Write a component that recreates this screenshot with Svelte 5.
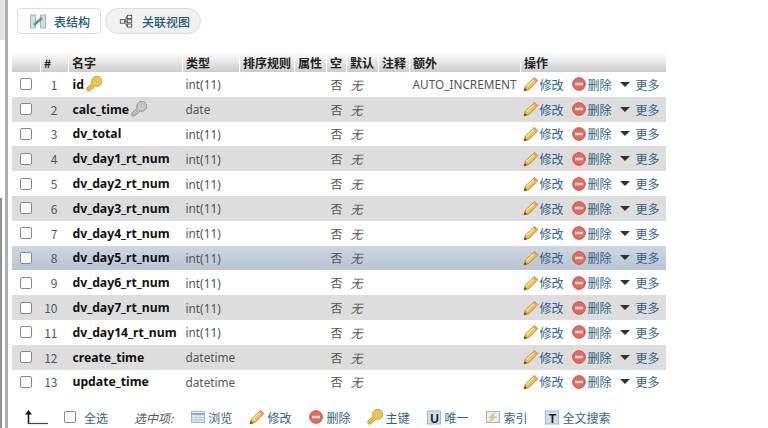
<script>
    const fields = [
        { name: "id", type: "int(11)", key: "primary", extra: "AUTO_INCREMENT" },
        { name: "calc_time", type: "date", key: "index" },
        { name: "dv_total", type: "int(11)" },
        { name: "dv_day1_rt_num", type: "int(11)" },
        { name: "dv_day2_rt_num", type: "int(11)" },
        { name: "dv_day3_rt_num", type: "int(11)" },
        { name: "dv_day4_rt_num", type: "int(11)" },
        { name: "dv_day5_rt_num", type: "int(11)", hover: true },
        { name: "dv_day6_rt_num", type: "int(11)" },
        { name: "dv_day7_rt_num", type: "int(11)" },
        { name: "dv_day14_rt_num", type: "int(11)" },
        { name: "create_time", type: "datetime" },
        { name: "update_time", type: "datetime" }
    ];
    const heads = ["", "#", "名字", "类型", "排序规则", "属性", "空", "默认", "注释", "额外", "操作"];
</script>

{#snippet pencil()}
    <svg class="ic" width="16" height="16" viewBox="0 0 16 16">
        <path d="M1 15 L2.5 10 L11.5 1.5 L14.8 4.6 L6 13.4 Z" fill="#f3c352" stroke="#b5842c" stroke-width="1"/>
        <path d="M3.5 10.5 L11.8 2.8" stroke="#fbe7a8" stroke-width="1.4"/>
        <path d="M11.5 1.5 L14.8 4.6 L13.2 6.2 L9.9 3.1 Z" fill="#e8a070"/>
        <path d="M1 15 L1.9 12 L4 14 Z" fill="#5a4420"/>
    </svg>
{/snippet}

{#snippet remove()}
    <svg class="ic" width="16" height="16" viewBox="0 0 16 16">
        <circle cx="8" cy="8" r="6.3" fill="#e9695e" stroke="#cb4a40"/>
        <rect x="4" y="6.8" width="8" height="2.4" fill="#fbe3df"/>
    </svg>
{/snippet}

{#snippet keyIcon(fill, line)}
    <svg class="ic" width="16" height="16" viewBox="0 0 16 16">
        <path d="M6.2 7.2 A5 5 0 1 1 9.2 10 L7.6 11 L6.8 12.6 L5 13 L4.4 14.6 L1.8 15.2 L0.8 14 L1 12 Z" fill={fill} stroke={line}/>
        <path d="M2.2 13.6 L7.2 8.8" stroke={line} stroke-width="0.8"/>
        <circle cx="11.6" cy="4.2" r="1.3" fill="#fff" fill-opacity="0.65" stroke={line} stroke-width="0.6"/>
    </svg>
{/snippet}

<div class="shell">
    <aside class="side">
        <div class="side-top"></div>
        <div class="side-gap"></div>
        <div class="side-low"></div>
    </aside>

    <main class="page">
        <nav class="tabs">
            <button class="tab">
                <svg width="16" height="16" viewBox="0 0 16 16">
                    <rect x="0.5" y="2" width="5" height="13" fill="#cddcee" stroke="#9cb5d3"/>
                    <rect x="10.5" y="2" width="5" height="13" fill="#cddcee" stroke="#9cb5d3"/>
                    <path d="M4 12 L12 5" stroke="#5da03a" stroke-width="2.5"/>
                </svg>
                表结构
            </button>
            <button class="tab round">
                <svg width="14" height="14" viewBox="0 0 16 16">
                    <g fill="#fff" stroke="#444">
                        <rect x="1.5" y="6.5" width="5" height="4"/>
                        <rect x="9.5" y="1.5" width="5" height="3.5"/>
                        <rect x="9.5" y="6.5" width="5" height="3.5"/>
                        <rect x="9.5" y="11.5" width="5" height="3.5"/>
                        <path d="M6.5 8.5 H8 M8 3.5 V13 M8 3.5 H9.5 M8 13 H9.5"/>
                    </g>
                </svg>
                关联视图
            </button>
        </nav>

        <table>
            <thead>
                <tr>
                    {#each heads as h}
                        <th>{h}</th>
                    {/each}
                </tr>
            </thead>
            <tbody>
                {#each fields as f, i}
                    <tr class:even={i % 2 === 1} class:hover={f.hover}>
                        <td class="chk"><span class="box"></span></td>
                        <td class="num">{i + 1}</td>
                        <td class="name">
                            <div class="namewrap">
                                <b>{f.name}</b>
                                {#if f.key === "primary"}
                                    {@render keyIcon("#f4c552", "#cf9a30")}
                                {:else if f.key === "index"}
                                    {@render keyIcon("#c6c6c6", "#939393")}
                                {/if}
                            </div>
                        </td>
                        <td class="latin">{f.type}</td>
                        <td></td>
                        <td></td>
                        <td>否</td>
                        <td><i>无</i></td>
                        <td></td>
                        <td class="latin">{f.extra ?? ""}</td>
                        <td class="opcell">
                            <div class="actions">
                                <span class="act">{@render pencil()}<span>修改</span></span>
                                <span class="act">{@render remove()}<span>删除</span></span>
                                <span class="act more"><span class="caret"></span><span>更多</span></span>
                            </div>
                        </td>
                    </tr>
                {/each}
            </tbody>
        </table>

        <footer class="bulk">
            <svg class="arrow" width="26" height="16" viewBox="0 0 26 16">
                <path d="M5.5 15 V3" stroke="#111" stroke-width="1.5"/>
                <path d="M2 5.5 L5.5 1 L9 5.5 Z" fill="#111"/>
                <path d="M5 14.5 H25" stroke="#444" stroke-width="1.2"/>
            </svg>
            <span class="box"></span>
            <span class="all">全选</span>
            <i class="with">选中项:</i>
            <span class="link">
                <svg class="ic" width="16" height="16" viewBox="0 0 16 16">
                    <rect x="1.5" y="2.5" width="13" height="11" fill="#e6eef8" stroke="#9db6d3"/>
                    <path d="M1.5 5 H14.5" stroke="#8eabd0" stroke-width="2"/>
                    <path d="M2 8.5 H14 M2 11 H14 M6 6 V13 M10 6 V13" stroke="#b5c9e2"/>
                </svg>
                浏览
            </span>
            <span class="link">{@render pencil()}修改</span>
            <span class="link">{@render remove()}删除</span>
            <span class="link">{@render keyIcon("#f4c552", "#cf9a30")}主键</span>
            <span class="link">
                <svg class="ic" width="16" height="16" viewBox="0 0 16 16">
                    <rect x="1.5" y="2" width="13" height="13" fill="#cfdff0" stroke="#9db6d3"/>
                    <text x="8.5" y="14" text-anchor="middle" class="glyph">U</text>
                </svg>
                唯一
            </span>
            <span class="link">
                <svg class="ic" width="16" height="16" viewBox="0 0 16 16">
                    <rect x="1.5" y="2.5" width="13" height="11" fill="#e6eef7" stroke="#9db6d3"/>
                    <path d="M10 3 L3 9 H6.5 L3.5 14 L12 7.5 H8.5 Z" fill="#ecc552"/>
                </svg>
                索引
            </span>
            <span class="link">
                <svg class="ic" width="16" height="16" viewBox="0 0 16 16">
                    <rect x="1.5" y="2" width="13" height="13" fill="#cfdff0" stroke="#9db6d3"/>
                    <text x="8.5" y="14" text-anchor="middle" class="glyph">T</text>
                </svg>
                全文搜索
            </span>
        </footer>
    </main>
</div>

<style>
    :global(body) {
        background: #fff;
        overflow: hidden;
    }

    .shell {
        display: flex;
        height: 428px;
        overflow: hidden;
    }

    .side {
        display: flex;
        flex-direction: column;
        flex: none;
        width: 5px;
        border-right: 3px solid #adadad;
    }

    .side-top {
        height: 40px;
        background: #e2e2e2;
    }

    .side-gap {
        height: 158px;
    }

    .side-low {
        flex: 1;
        width: 2px;
        background: #8f8f8f;
    }

    .page {
        flex: 1;
        padding-top: 8px;
        font-family: "Noto Sans CJK SC", "Noto Sans", sans-serif;
        font-size: 12px;
        color: #555;
    }

    .tabs {
        display: flex;
        gap: 5px;
        margin: 0 0 18px 9px;
    }

    .tab {
        display: flex;
        align-items: center;
        gap: 8px;
        height: 26px;
        padding: 0 10px 0 12px;
        background: #fff;
        border: 1px solid #ddd;
        border-radius: 4px;
        font: inherit;
        font-weight: 500;
        color: #235a81;
    }

    .tab.round {
        gap: 9px;
        margin-left: -1px;
        border-radius: 13px;
        padding: 0 10px 0 13px;
        background: #f1f1f1;
    }

    table {
        border-collapse: collapse;
        margin-left: 3px;
        width: 655px;
        table-layout: fixed;
    }

    th {
        box-sizing: border-box;
        height: 20px;
        padding: 0 0 0 3px;
        background: linear-gradient(#fff, #ccc);
        border-left: 1px solid #fff;
        color: #222;
        font-weight: 700;
        text-align: left;
        font-size: 12px;
    }

    th:nth-child(1) { width: 29px; }
    th:nth-child(2) { width: 28px; }
    th:nth-child(3) { width: 114px; }
    th:nth-child(4) { width: 57px; }
    th:nth-child(5) { width: 55px; }
    th:nth-child(6) { width: 32px; }
    th:nth-child(7) { width: 20px; }
    th:nth-child(8) { width: 32px; }
    th:nth-child(9) { width: 31px; }
    th:nth-child(10) { width: 111px; }

    td {
        height: 24.8px;
        padding: 0 0 0 4px;
        white-space: nowrap;
    }

    tr.even td {
        background: #ddd;
    }

    tr.hover td {
        background: linear-gradient(#ced6e0, #b8c5d5);
    }

    .box {
        display: block;
        flex: none;
        width: 10px;
        height: 10px;
        border: 1px solid #888;
        border-radius: 2px;
        background: #fff;
    }

    td.chk {
        padding-left: 8px;
    }

    td.num {
        padding: 0 11px 0 0;
        text-align: right;
    }

    td.opcell {
        padding-left: 2px;
    }

    .namewrap {
        display: flex;
        align-items: center;
        gap: 2px;
    }

    .name b {
        font-family: "Noto Sans", sans-serif;
        font-weight: 700;
        color: #111;
        font-size: 12.2px;
    }

    td.latin {
        padding-left: 3px;
        font-family: "Noto Sans", sans-serif;
        font-size: 11.8px;
    }

    .actions {
        display: flex;
        align-items: center;
        color: #2f6388;
    }

    .act {
        display: inline-flex;
        align-items: center;
        gap: 1px;
        margin-right: 7px;
    }

    .act.more {
        margin-left: 1px;
        margin-right: 0;
    }

    .ic {
        flex: none;
    }

    .caret {
        width: 0;
        height: 0;
        margin-right: 5px;
        border: 5px solid transparent;
        border-top: 5px solid #333;
        border-bottom: 0;
    }

    .bulk {
        display: flex;
        align-items: center;
        height: 18px;
        margin: 14px 0 0 15px;
        color: #2f6388;
    }

    .arrow {
        margin-right: 15px;
    }

    .all {
        margin-left: 8px;
    }

    .with {
        margin-left: 26px;
        color: #555;
    }

    .link {
        display: inline-flex;
        align-items: center;
        gap: 2px;
        margin-left: 17px;
    }

    .glyph {
        font: 700 12px "Liberation Sans", sans-serif;
        fill: #222;
    }
</style>
